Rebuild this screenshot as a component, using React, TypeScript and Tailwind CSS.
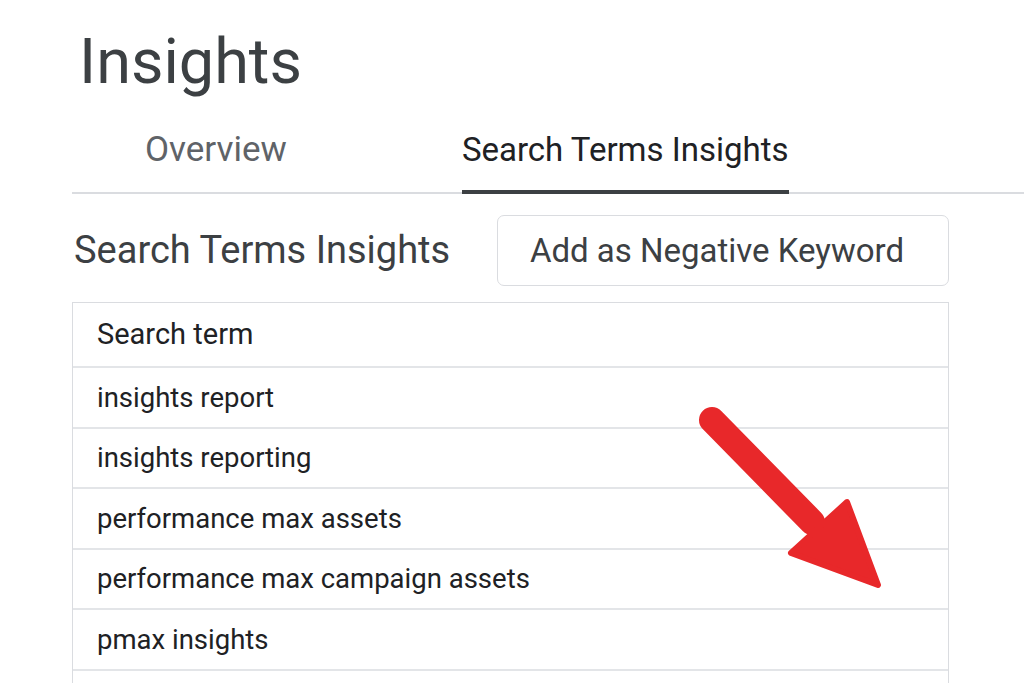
const terms = [
  "insights report",
  "insights reporting",
  "performance max assets",
  "performance max campaign assets",
  "pmax insights",
  "",
];

const Arrow = () => (
  <svg
    className="absolute left-0 top-0 pointer-events-none"
    width="1024"
    height="683"
    viewBox="0 0 1024 683"
  >
    <line
      x1="712"
      y1="420"
      x2="812"
      y2="522"
      stroke="#e8282a"
      strokeWidth="26"
      strokeLinecap="round"
    />
    <polygon
      points="847,502 791,553 878,585"
      fill="#e8282a"
      stroke="#e8282a"
      strokeWidth="6"
      strokeLinejoin="round"
    />
  </svg>
);

const App = () => {
  return (
    <div
      className="relative w-[1024px] h-[683px] overflow-hidden bg-white"
      style={{ fontFamily: "Roboto, 'Open Sans', sans-serif" }}
    >
      <div className="flex flex-col pl-[72px]">
        <h1 className="h-[110px] pl-[7px] pt-[30px] text-[63px] leading-[63px] text-[#3c4043]">
          Insights
        </h1>
        <div className="flex h-[84px] border-b-2 border-[#dadce0]">
          <div className="ml-[73px] flex items-center pb-[2px] text-[35px] text-[#5f6368]">
            Overview
          </div>
          <div className="ml-[175px] -mb-[2px] flex items-center border-b-4 border-[#3c4043] text-[33px] text-[#202124]">
            Search Terms Insights
          </div>
        </div>
        <div className="mt-[21px] flex w-[877px] items-center justify-between">
          <h2 className="pl-[2px] text-[38px] text-[#3c4043]">Search Terms Insights</h2>
          <button className="flex h-[71px] w-[452px] items-center justify-center rounded-[7px] border border-[#dadce0] pr-[12px] text-[33px] text-[#3c4043]">
            Add as Negative Keyword
          </button>
        </div>
        <div className="mt-[16px] w-[877px] border-x border-t border-[#dadce0]">
          <div className="flex h-[65px] items-center border-b-2 border-[#e3e5e8] pl-[24px] text-[29px] text-[#202124]">
            Search term
          </div>
          {terms.map((t, i) => (
            <div
              key={i}
              className="flex h-[60.5px] items-center border-b-2 border-[#e3e5e8] pl-[24px] text-[27.5px] text-[#202124]"
            >
              {t}
            </div>
          ))}
        </div>
      </div>
      <Arrow />
    </div>
  );
};

export default App;
